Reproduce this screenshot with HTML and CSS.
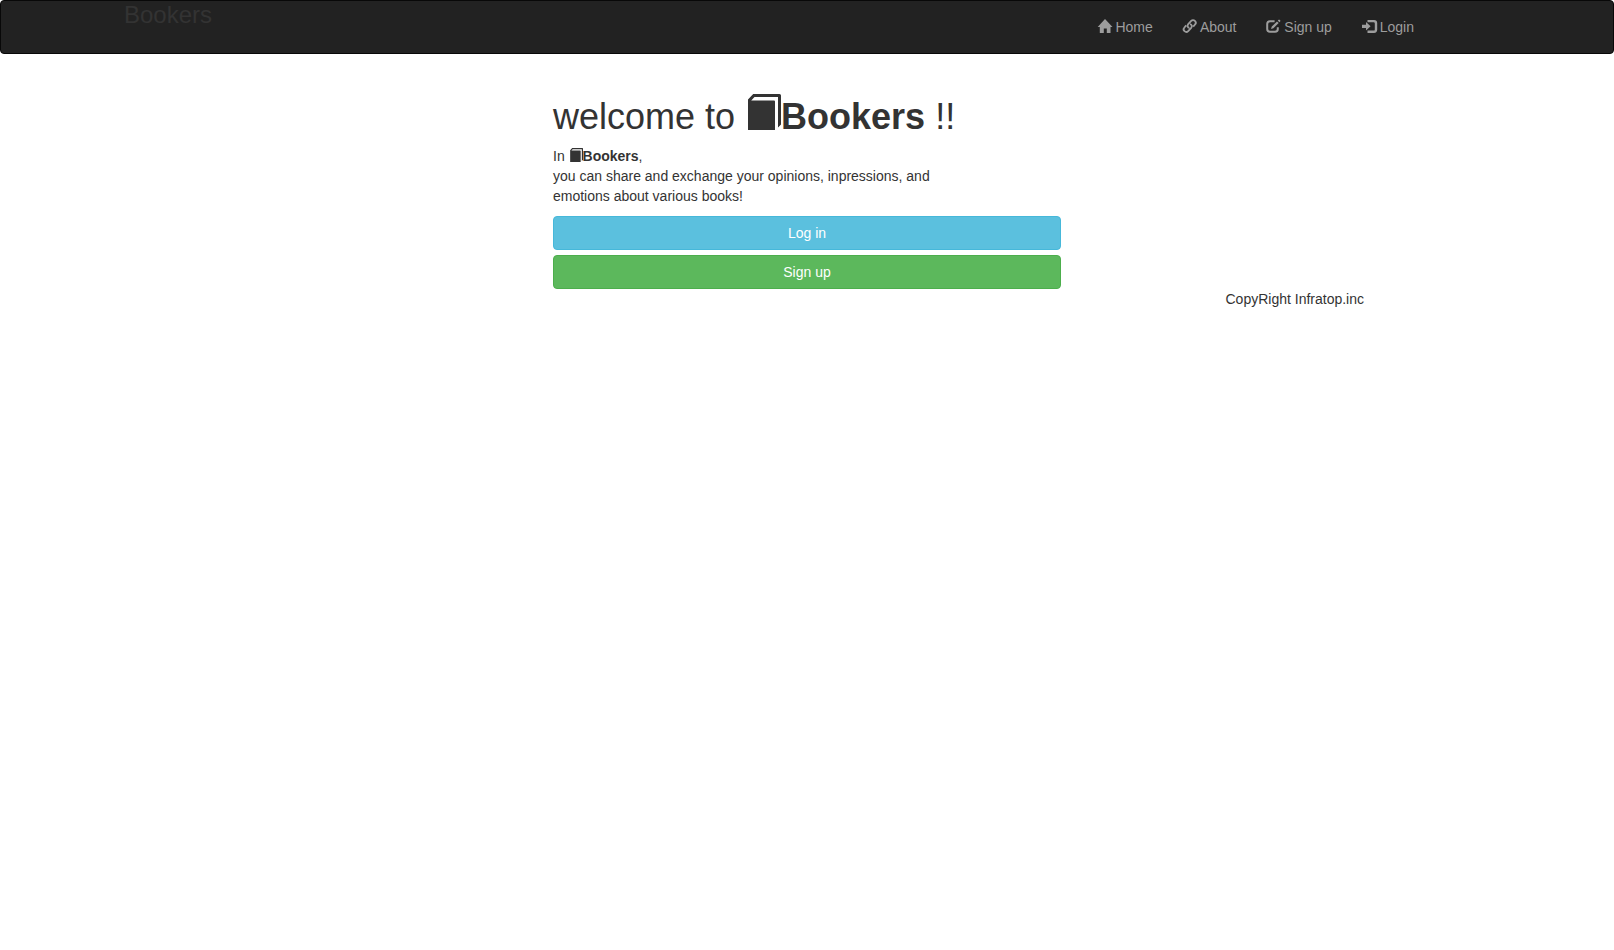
FILE: index.html
```html
<!DOCTYPE html>
<html lang="en">
<head>
  <meta charset="utf-8">
  <meta name="viewport" content="width=device-width, initial-scale=1">
  <title>Bookers</title>
  <link rel="stylesheet" href="styles.css">
</head>
<body>
  <svg class="sprite" aria-hidden="true">
    <symbol id="book" viewBox="0 0 36 36">
      <path d="M3 5.5 8.2 0H34.5Q36 0 36 1.5V30.5L33 33.5V3H9.5L6.2 6.4H29Q30 6.4 30 7.4V36H3Z"/>
    </symbol>
  </svg>

  <header class="navbar">
    <div class="navbar-brand">Bookers</div>
    <nav>
      <ul class="navbar-nav">
        <li><a class="nav-link" href="#home"><svg class="icon" viewBox="0 0 14 14" aria-hidden="true"><path d="M7 0 14.5 8H12.5V14H8.8V9.5H5.8V14H1.8V8H-.3Z"/></svg> Home</a></li>
        <li><a class="nav-link" href="#about"><svg class="icon icon-line icon-link" viewBox="0 0 14 14" aria-hidden="true"><path d="M6.4 8.9C4.6 8.6 4 6.6 5.2 5.2L8.2 1.9C9.2 .8 10.8 .8 11.9 1.8S13 4.4 12 5.5L10.2 7.6M7 5.1C8.8 5.4 9.4 7.4 8.2 8.8L5.2 12.1C4.2 13.2 2.6 13.2 1.5 12.2S.4 9.6 1.4 8.5L3.2 6.4"/></svg> About</a></li>
        <li><a class="nav-link" href="#sign-up"><svg class="icon icon-line" viewBox="0 0 14 14" aria-hidden="true"><path d="M8.6 2.2H4Q1.2 2.2 1.2 5V10Q1.2 12.8 4 12.8H9Q11.8 12.8 11.8 10V8.2"/><path class="fill" d="M5 10 5.8 7.6 11 2.4 12.7 4.1 7.4 9.3ZM11.8 1.6 12.7.7Q13 .4 13.4.7L14.3 1.6Q14.6 2 14.3 2.3L13.4 3.2Z"/></svg> Sign up</a></li>
        <li><a class="nav-link" href="#login"><svg class="icon" viewBox="0 0 14 14" aria-hidden="true"><path d="M0 5.7H4V3L8.6 7.3 4 11.6V8.9H0ZM5.5 .9H12Q15.2 .9 15.2 4V10.8Q15.2 13.9 12 13.9H5.5V11.6H11.6Q12.8 11.6 12.8 10.4V4.4Q12.8 3.2 11.6 3.2H5.5Z"/></svg> Login</a></li>
      </ul>
    </nav>
  </header>

  <main class="welcome">
    <h1 class="welcome-title">welcome to <strong><svg class="icon" aria-hidden="true"><use href="#book"/></svg>Bookers</strong> !!</h1>
    <p class="welcome-text">In <strong><svg class="icon" aria-hidden="true"><use href="#book"/></svg>Bookers</strong>,<br>
      you can share and exchange your opinions, inpressions, and<br>
      emotions about various books!</p>
    <div class="actions">
      <a class="btn btn-info" href="#login">Log in</a>
      <a class="btn btn-success" href="#sign-up">Sign up</a>
    </div>
  </main>

  <footer class="footer">CopyRight Infratop.inc</footer>
</body>
</html>
```
FILE: styles.css
```css
* {
  box-sizing: border-box;
}

body {
  margin: 0;
  font-family: "Helvetica Neue", Helvetica, Arial, "Liberation Sans", sans-serif;
  font-size: 14px;
  line-height: 20px;
  color: #333;
  background: #fff;
}

.sprite {
  display: none;
}

.icon {
  width: 1em;
  height: 1em;
  vertical-align: -1px;
  fill: currentColor;
  overflow: visible;
}

.icon-line {
  fill: none;
  stroke: currentColor;
  stroke-width: 2;
}

.icon-link {
  stroke-width: 1.8;
}

.icon-line .fill {
  fill: currentColor;
  stroke: none;
}

.navbar {
  display: flex;
  justify-content: space-between;
  align-items: flex-start;
  padding: 0 184px 0 123px;
  background: #222;
  border: 1px solid #080808;
  border-radius: 4px;
}

.navbar-brand {
  font-size: 24px;
  line-height: 28px;
}

.navbar-nav {
  display: flex;
  margin: 0;
  padding: 0;
  list-style: none;
}

.nav-link {
  display: block;
  padding: 16px 15px;
  color: #9d9d9d;
  text-decoration: none;
}

.nav-link:hover {
  color: #fff;
}

.welcome {
  width: calc(100% / 3);
  margin: 40px auto 0;
  padding: 0 15px;
}

.welcome-title {
  margin: 0 0 10px;
  font-size: 36px;
  font-weight: 500;
  line-height: 38px;
}

.welcome-text {
  margin: 0 0 10px;
}

.actions {
  display: flex;
  flex-direction: column;
  gap: 5px;
}

.btn {
  padding: 6px 12px;
  border: 1px solid;
  border-radius: 4px;
  color: #fff;
  text-align: center;
  text-decoration: none;
}

.btn-info {
  background: #5bc0de;
  border-color: #46b8da;
}

.btn-success {
  background: #5cb85c;
  border-color: #4cae4c;
}

.footer {
  margin-left: 75%;
  padding: 0 15px;
}
```
